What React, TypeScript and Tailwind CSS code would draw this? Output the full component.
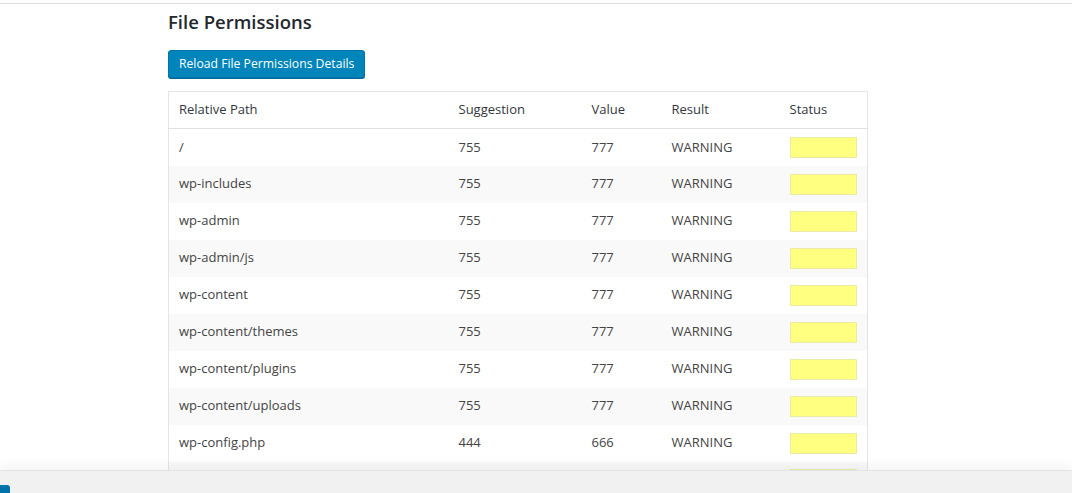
const rows = [
  { path: "/", suggestion: "755", value: "777" },
  { path: "wp-includes", suggestion: "755", value: "777" },
  { path: "wp-admin", suggestion: "755", value: "777" },
  { path: "wp-admin/js", suggestion: "755", value: "777" },
  { path: "wp-content", suggestion: "755", value: "777" },
  { path: "wp-content/themes", suggestion: "755", value: "777" },
  { path: "wp-content/plugins", suggestion: "755", value: "777" },
  { path: "wp-content/uploads", suggestion: "755", value: "777" },
  { path: "wp-config.php", suggestion: "444", value: "666" },
  { path: ".htaccess", suggestion: "444", value: "666" },
];

const App = () => {
  return (
    <div
      className="relative h-screen overflow-hidden bg-white text-[#444]"
      style={{ fontFamily: '"Open Sans", "Noto Sans", sans-serif' }}
    >
      <div className="mt-[3px] border-t border-[#dedede]" />

      <div className="pl-[168px]">
        <h2 className="mt-[4px] text-[18.5px] font-semibold leading-[28px] text-[#23282d]">
          File Permissions
        </h2>

        <button className="mt-[14px] h-[28px] rounded-[3px] border border-[#0073aa] bg-[#0085ba] px-[10px] text-[12.2px] text-white shadow-[0_1px_0_#006799]">
          Reload File Permissions Details
        </button>

        <table className="mt-[13px] w-[699px] table-fixed border border-[#e5e5e5] text-left text-[13px]">
          <colgroup>
            <col className="w-[280px]" />
            <col className="w-[133px]" />
            <col className="w-[80px]" />
            <col className="w-[118px]" />
            <col className="w-[88px]" />
          </colgroup>
          <thead>
            <tr className="h-[37px] border-b border-[#e1e1e1] text-[#32373c]">
              <th className="px-[10px] font-normal">Relative Path</th>
              <th className="px-[10px] font-normal">Suggestion</th>
              <th className="px-[10px] font-normal">Value</th>
              <th className="px-[10px] font-normal">Result</th>
              <th className="px-[10px] font-normal">Status</th>
            </tr>
          </thead>
          <tbody>
            {rows.map((r, i) => (
              <tr key={r.path} className={`h-[37px] ${i % 2 === 1 ? "bg-[#f9f9f9]" : "bg-white"}`}>
                <td className="px-[10px]">{r.path}</td>
                <td className="px-[10px]">{r.suggestion}</td>
                <td className="px-[10px]">{r.value}</td>
                <td className="px-[10px]">WARNING</td>
                <td className="px-[10px]">
                  <div className="h-[21px] w-[67px] border border-[#ebeba8] bg-[#ffff80]" />
                </td>
              </tr>
            ))}
          </tbody>
        </table>
      </div>

      {/* footer bar sitting over the page */}
      <div className="absolute inset-x-0 bottom-0 h-[23px] border-t border-[#e3e3e3] bg-[#f1f1f1] shadow-[0_-6px_8px_rgba(0,0,0,0.04)]">
        <div className="absolute bottom-0 left-0 h-[8px] w-[10px] rounded-tr-[3px] bg-[#0073aa]" />
      </div>
    </div>
  );
};

export default App;
